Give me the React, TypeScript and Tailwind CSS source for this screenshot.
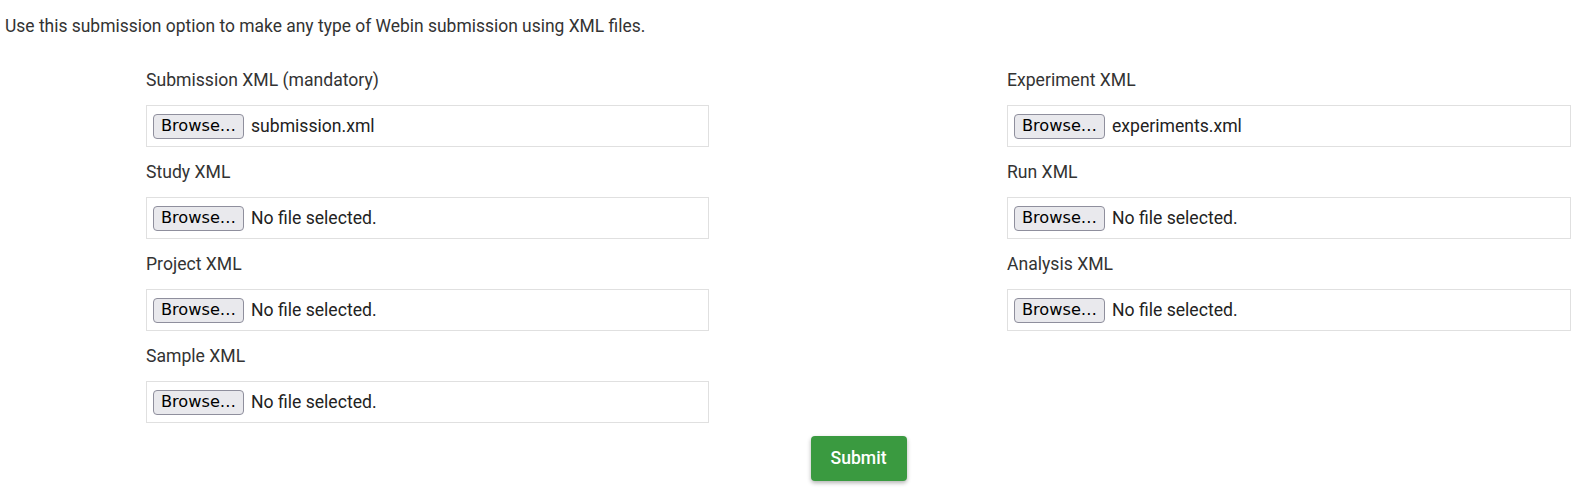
const leftFields = [
  { label: "Submission XML (mandatory)", file: "submission.xml" },
  { label: "Study XML", file: "" },
  { label: "Project XML", file: "" },
  { label: "Sample XML", file: "" },
];

const rightFields = [
  { label: "Experiment XML", file: "experiments.xml" },
  { label: "Run XML", file: "" },
  { label: "Analysis XML", file: "" },
];

function FileField({ label, file }: { label: string; file: string }) {
  return (
    <div className="mb-[13px]">
      <div className="h-6 leading-6 mb-[13px] text-[#333]">{label}</div>
      <div className="h-[42px] border border-[#e0e0e0] flex items-center pl-[6px] gap-[7px]">
        <span className="h-[25px] w-[91px] flex items-center justify-center rounded-[4px] border border-[#8f8f9d] bg-[#e9e9ed] text-[16.2px] leading-none text-black font-['DejaVu_Sans',sans-serif]">
          Browse…
        </span>
        <span className="text-[#222]">{file || "No file selected."}</span>
      </div>
    </div>
  );
}

export default function App() {
  return (
    <div className="bg-white min-h-screen font-['Roboto',sans-serif] text-[17.6px]">
      <p className="pt-[14px] pl-[5px] leading-6 text-[17.45px] text-[#333]">
        Use this submission option to make any type of Webin submission using XML files.
      </p>

      <div className="pl-[146px] pr-[11px] pt-[30px]">
        <div className="flex justify-between">
          <div className="w-[563px]">
            {leftFields.map((f) => (
              <FileField key={f.label} {...f} />
            ))}
          </div>
          <div className="w-[564px]">
            {rightFields.map((f) => (
              <FileField key={f.label} {...f} />
            ))}
          </div>
        </div>

        <div className="flex justify-center">
          <button className="w-[96px] h-[45px] rounded-[4px] bg-[#3a9a40] text-white font-medium shadow-[0_2px_4px_rgba(0,0,0,0.3)]">
            Submit
          </button>
        </div>
      </div>
    </div>
  );
}
